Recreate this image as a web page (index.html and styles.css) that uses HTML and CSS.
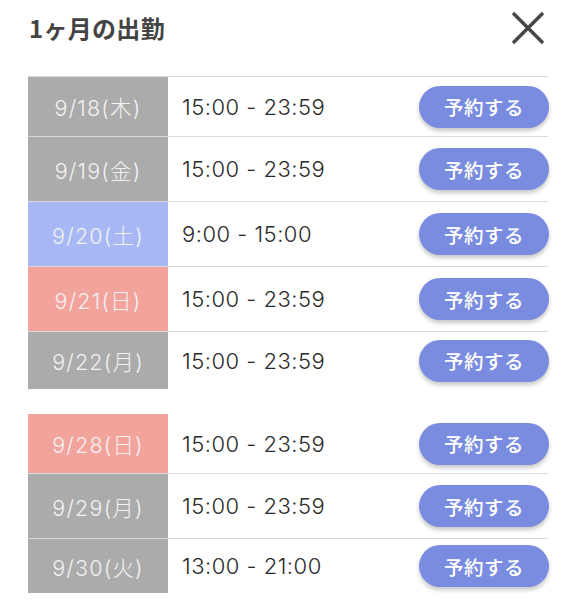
FILE: index.html
```html
<!DOCTYPE html>
<html lang="ja">
<head>
<meta charset="utf-8">
<link rel="stylesheet" href="styles.css">
</head>
<body>
<div class="page">
  <header class="header">
    <h1 class="title">1ヶ月の出勤</h1>
    <button class="close" aria-label="閉じる">
      <svg width="34" height="34" viewBox="0 0 34 34"><path d="M2 2 L32 32 M32 2 L2 32" stroke="#454545" stroke-width="3.4" fill="none"/></svg>
    </button>
  </header>

  <section class="group">
    <div class="row h60"><div class="date weekday">9/18(木)</div><div class="time">15:00 - 23:59</div><button class="reserve">予約する</button></div>
    <div class="row"><div class="date weekday">9/19(金)</div><div class="time">15:00 - 23:59</div><button class="reserve">予約する</button></div>
    <div class="row"><div class="date sat">9/20(土)</div><div class="time">9:00 - 15:00</div><button class="reserve">予約する</button></div>
    <div class="row"><div class="date sun">9/21(日)</div><div class="time">15:00 - 23:59</div><button class="reserve">予約する</button></div>
    <div class="row h58"><div class="date weekday">9/22(月)</div><div class="time">15:00 - 23:59</div><button class="reserve">予約する</button></div>
  </section>

  <section class="group second">
    <div class="row h60 noborder"><div class="date sun">9/28(日)</div><div class="time">15:00 - 23:59</div><button class="reserve">予約する</button></div>
    <div class="row"><div class="date weekday">9/29(月)</div><div class="time">15:00 - 23:59</div><button class="reserve">予約する</button></div>
    <div class="row h55"><div class="date weekday">9/30(火)</div><div class="time">13:00 - 21:00</div><button class="reserve">予約する</button></div>
  </section>
</div>
</body>
</html>
```

FILE: styles.css
```css
* { box-sizing: border-box; }
html, body { margin: 0; padding: 0; background: #fff; }
body {
  font-family: Inter, "Noto Sans CJK JP", sans-serif;
  color: #333;
}
.page {
  width: 576px;
  padding: 0 28px 0 28px;
}
.header {
  height: 76px;
  display: flex;
  justify-content: space-between;
  align-items: flex-start;
}
.title {
  margin: 12px 0 0 1px;
  font-family: "Noto Sans CJK JP", sans-serif;
  font-size: 24px;
  font-weight: 700;
  color: #444;
  letter-spacing: 0.3px;
  line-height: 32px;
}
.close {
  margin: 11px 3px 0 0;
  padding: 0;
  border: 0;
  background: transparent;
  width: 34px;
  height: 34px;
  display: flex;
  align-items: center;
  justify-content: center;
}
.group {
  display: flex;
  flex-direction: column;
}
.group.second { margin-top: 24px; }
.row {
  height: 65px;
  display: grid;
  grid-template-columns: 140px 1fr auto;
  align-items: stretch;
  border-top: 1px solid #d9d9d9;
}
.row.h60 { height: 60px; }
.row.h58 { height: 58px; }
.row.h55 { height: 55px; }
.row.noborder { border-top-color: #fff; }
.date {
  display: flex;
  align-items: center;
  justify-content: center;
  color: #f2f2f2;
  font-size: 21.5px;
  letter-spacing: 1.2px;
  font-family: Inter, "Noto Sans CJK JP", sans-serif;
  font-weight: 300;
}
.weekday { background: #ababab; }
.sat { background: #a8b8f4; }
.sun { background: #f2a39c; }
.time {
  display: flex;
  align-items: center;
  padding-left: 14px;
  font-size: 22px;
  font-weight: 300;
  letter-spacing: 0.5px;
  color: #2a2a2a;
  font-family: Inter, sans-serif;
}
.reserve {
  align-self: center;
  width: 130px;
  height: 42px;
  border: 0;
  border-radius: 21px;
  background: #7a8ce0;
  color: #fff;
  font-family: "Noto Sans CJK JP", sans-serif;
  font-size: 19.5px;
  font-weight: 500;
  letter-spacing: 0.5px;
  box-shadow: 0 3px 4px rgba(0, 0, 0, 0.22);
  padding: 0;
  margin-right: -1px;
}
```
